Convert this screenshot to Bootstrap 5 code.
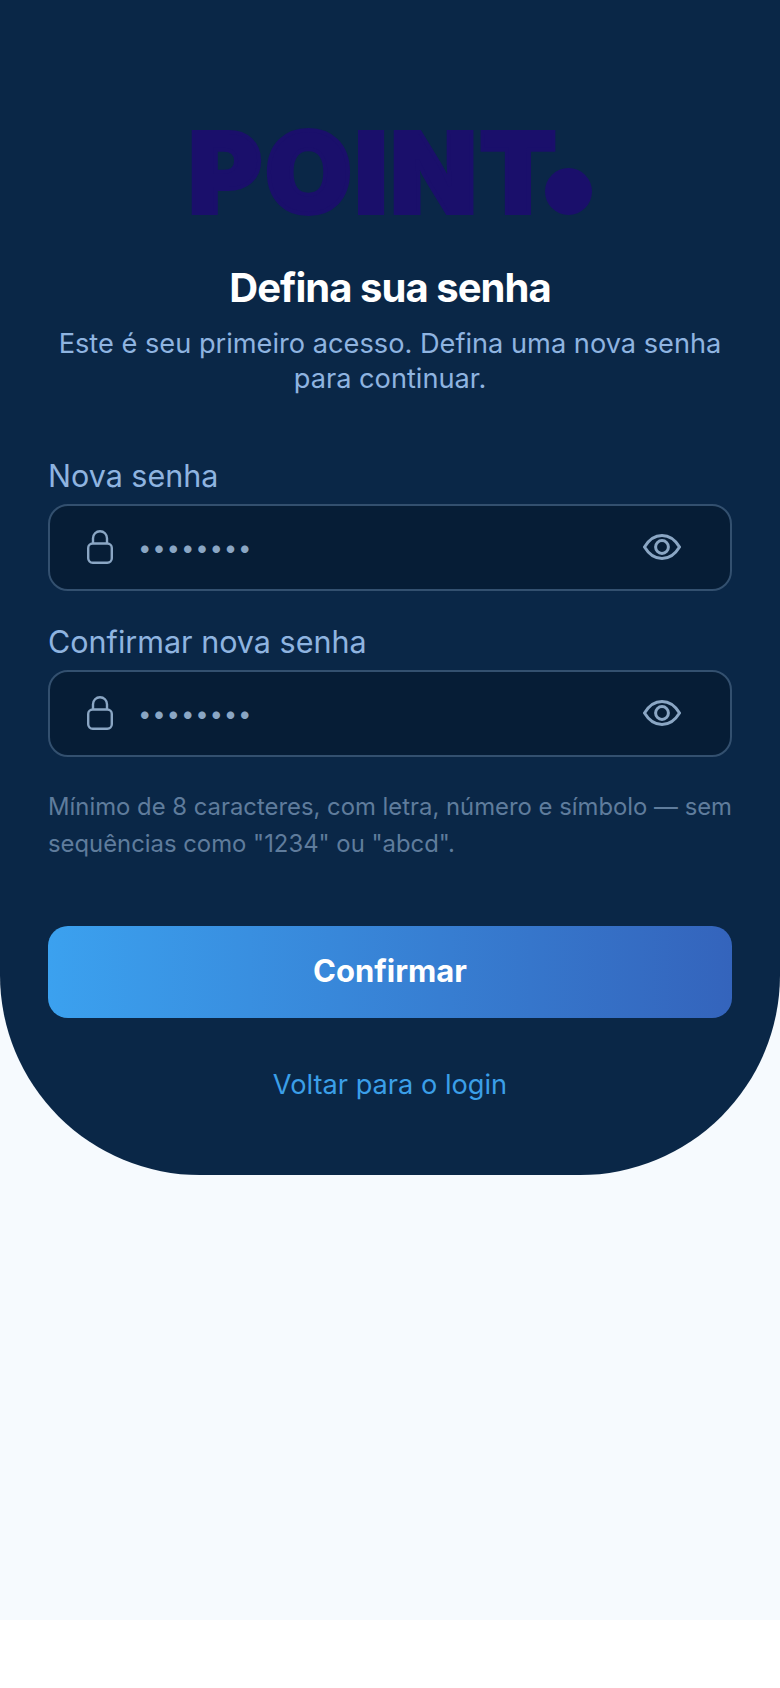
<!DOCTYPE html>
<html lang="pt-BR"><head><meta charset="utf-8"><title>Defina sua senha</title>
<link href="https://cdn.jsdelivr.net/npm/bootstrap@5.3.0/dist/css/bootstrap.min.css" rel="stylesheet">
<style>
html,body{background:#fff;margin:0;font-family:Inter,"Liberation Sans",sans-serif}
.pg{height:1620px;background:#f6fafe}
.panel{background:#0a2747;height:1175px;border-radius:0 0 200px 200px;padding:129px 48px 0}
.logo{height:86px;color:#1a0f6b;font-family:Inter,sans-serif;font-weight:900;font-size:112px;line-height:86px;letter-spacing:3px;-webkit-text-stroke:4px #1a0f6b}
.logo-dot{width:47px;height:47px;border-radius:50%;background:#1a0f6b;flex:none;margin:39px 0 0 -15px}
.ttl{color:#fff;font-size:40px;font-weight:700;line-height:48px;letter-spacing:-.95px;margin:49px 0 0}
.sub{color:#8fb4e0;font-size:27.2px;line-height:35px;margin:14px 0 0;text-align:center}
.frm{margin-top:61.5px}
.lbl{color:#8fb4e0;font-size:30.5px;line-height:36px;margin:0 0 10px;display:block}
.fld{height:87px;background:#061d36;border:2px solid #33506f;border-radius:20px;padding:0 49px 0 37px;gap:25px}
.fld + .lbl{margin-top:33px}
.fld .form-control{background:transparent;border:0;box-shadow:none;padding:0;color:#8aa6c4;font-size:24px;letter-spacing:.8px;height:40px;border-radius:0}
.hint{color:#5f7c9c;font-size:23.85px;line-height:37px;margin:31.5px 0 0}
.go{height:92px;border:0;border-radius:20px;background:linear-gradient(90deg,#3ba1ef,#3464bc);color:#fff;font-size:31px;font-weight:700;margin-top:63.5px}
.go:hover{color:#fff}
.back{color:#3b9fe8;font-size:27.2px;line-height:36px;text-decoration:none;display:block;margin-top:49px}
</style></head><body>
<div class="pg"><div class="panel">
<div class="logo d-flex justify-content-center" aria-label="POINT."><span>POINT</span><span class="logo-dot"></span></div>
<h1 class="ttl text-center">Defina sua senha</h1>
<p class="sub">Este é seu primeiro acesso. Defina uma nova senha para continuar.</p>
<form class="frm">
<label class="lbl" for="a">Nova senha</label>
<div class="fld d-flex align-items-center">
<svg width="26" height="34" viewBox="0 0 26 34" fill="none" stroke="#8aa6c4" stroke-width="2.4" class="flex-shrink-0"><rect x="1.2" y="13.5" width="23.6" height="19.3" rx="4.5"/><path d="M6 13.5V8.2a7 7 0 0 1 14 0v5.3"/></svg>
<input id="a" class="form-control" type="password" value="12345678">
<svg width="38" height="26" viewBox="0 0 38 26" fill="none" stroke="#8aa6c4" stroke-width="3" class="flex-shrink-0"><path d="M1.5 13C6 5.5 12 1.5 19 1.5S32 5.5 36.5 13C32 20.5 26 24.5 19 24.5S6 20.5 1.5 13Z"/><circle cx="19" cy="13" r="6.4"/></svg>
</div>
<label class="lbl" for="b">Confirmar nova senha</label>
<div class="fld d-flex align-items-center">
<svg width="26" height="34" viewBox="0 0 26 34" fill="none" stroke="#8aa6c4" stroke-width="2.4" class="flex-shrink-0"><rect x="1.2" y="13.5" width="23.6" height="19.3" rx="4.5"/><path d="M6 13.5V8.2a7 7 0 0 1 14 0v5.3"/></svg>
<input id="b" class="form-control" type="password" value="12345678">
<svg width="38" height="26" viewBox="0 0 38 26" fill="none" stroke="#8aa6c4" stroke-width="3" class="flex-shrink-0"><path d="M1.5 13C6 5.5 12 1.5 19 1.5S32 5.5 36.5 13C32 20.5 26 24.5 19 24.5S6 20.5 1.5 13Z"/><circle cx="19" cy="13" r="6.4"/></svg>
</div>
<p class="hint">Mínimo de 8 caracteres, com letra, número e símbolo — sem sequências como "1234" ou "abcd".</p>
<button type="button" class="btn go w-100">Confirmar</button>
<a class="back text-center" href="#">Voltar para o login</a>
</form>
</div></div>
<script src="https://cdn.jsdelivr.net/npm/bootstrap@5.3.0/dist/js/bootstrap.bundle.min.js"></script>
</body></html>
